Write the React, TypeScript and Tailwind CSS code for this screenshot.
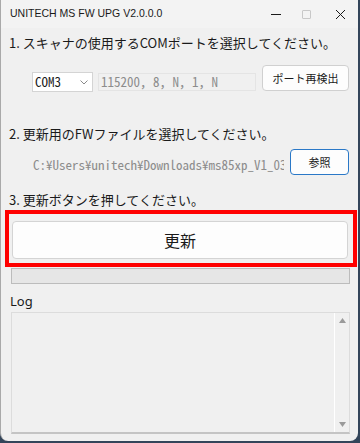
import React from "react";

const jp = { fontFamily: "'Noto Sans CJK JP', 'Noto Sans', sans-serif" };
const mono = { fontFamily: "'Noto Sans Mono CJK JP', 'Noto Sans CJK JP', 'DejaVu Sans Mono', monospace" };

export default function App() {
  return (
    <div className="w-[360px] h-[443px] bg-[#33455a] overflow-hidden">
      <div className="w-[358px] h-[441px] bg-[#f0f0f0] rounded-b-[8px] border-l border-[#a9a9a9] flex flex-col">
        {/* Title bar */}
        <div className="h-[28px] shrink-0 bg-[#f3f3f3] flex items-center pl-[9px]">
          <span className="text-[10.5px] text-[#1a1a1a]" style={{ fontFamily: "'Liberation Sans', sans-serif" }}>
            UNITECH MS FW UPG V2.0.0.0
          </span>
          <div className="ml-auto flex items-center h-full">
            <div className="w-[31px] flex justify-center">
              <div className="w-[10px] h-px bg-[#1a1a1a]" />
            </div>
            <div className="w-[31px] flex justify-center">
              <div className="w-[9px] h-[9px] border border-[#c8c8c8] rounded-[1px]" />
            </div>
            <div className="w-[36px] flex justify-center">
              <svg width="11" height="11" viewBox="0 0 11 11">
                <path d="M1 1L10 10M10 1L1 10" stroke="#1a1a1a" strokeWidth="1" />
              </svg>
            </div>
          </div>
        </div>

        {/* Step 1 */}
        <div className="pl-[8px] mt-[6px] text-[13px] leading-[18px] text-[#1a1a1a]" style={jp}>
          1. スキャナの使用するCOMポートを選択してください。
        </div>
        <div className="flex items-start mt-[13px] pl-[31px]">
          <div className="mt-[7px] w-[61px] h-[20px] bg-white border border-[#d4d4d4] flex items-center pl-[2px] pr-[4px]">
            <span className="text-[13px] text-[#1a1a1a]" style={mono}>COM3</span>
            <svg className="ml-auto" width="8" height="5" viewBox="0 0 8 5">
              <path d="M0.5 0.5L4 4L7.5 0.5" stroke="#8a8a8a" fill="none" strokeWidth="1" />
            </svg>
          </div>
          <div className="mt-[8px] ml-[5px] w-[158px] h-[18px] border border-[#e4e4e4] flex items-center pl-[2px] text-[13px] text-[#8c8c8c]" style={mono}>
            115200，8，N，1，N
          </div>
          <button className="ml-[6px] w-[87px] h-[26px] bg-[#fdfdfd] border border-[#d0d0d0] rounded-[4px] text-[11px] text-[#1a1a1a] flex items-center justify-center" style={jp}>
            ポート再検出
          </button>
        </div>

        {/* Step 2 */}
        <div className="pl-[8px] mt-[33px] text-[13px] leading-[18px] text-[#1a1a1a]" style={jp}>
          2. 更新用のFWファイルを選択してください。
        </div>
        <div className="flex items-start mt-[6px] pl-[31px]">
          <div className="mt-[6px] w-[252px] h-[19px] overflow-hidden whitespace-nowrap flex items-center pl-[1px] text-[13px] text-[#8c8c8c]" style={mono}>
            C:¥Users¥unitech¥Downloads¥ms85xp_V1_03
          </div>
          <button className="ml-[6px] w-[59px] h-[26px] bg-[#fdfdfd] border border-[#2a78c7] rounded-[4px] text-[11px] text-[#1a1a1a] flex items-center justify-center" style={jp}>
            参照
          </button>
        </div>

        {/* Step 3 */}
        <div className="pl-[8px] mt-[16px] text-[13px] leading-[18px] text-[#1a1a1a]" style={jp}>
          3. 更新ボタンを押してください。
        </div>
        <div className="ml-[4px] mt-[1px] w-[352px] h-[57px] border-4 border-[#ff0000] pl-[3px] pt-[7px]">
          <button className="w-[336px] h-[38px] bg-[#fdfdfd] border border-[#d4d4d4] rounded-[4px] text-[16px] text-[#1a1a1a] flex items-center justify-center" style={jp}>
            更新
          </button>
        </div>
        <div className="ml-[10px] mt-[1px] w-[339px] h-[16px] bg-[#e6e6e6] border border-[#bcbcbc]" />

        {/* Log */}
        <div className="pl-[9px] mt-[8px] text-[13px] leading-[18px] text-[#1a1a1a]" style={{ fontFamily: "'Noto Sans', sans-serif" }}>
          Log
        </div>
        <div className="ml-[10px] mt-[2px] w-[339px] h-[122px] border border-[#dcdcdc] border-b-2 border-b-[#c4c4c4] flex">
          <div className="flex-1" />
          <div className="w-[15px] border-l border-[#ffffff] flex flex-col items-center justify-between py-[5px]">
            <svg width="7" height="5" viewBox="0 0 7 5">
              <path d="M3.5 0L7 5H0Z" fill="#9a9a9a" />
            </svg>
            <svg width="7" height="5" viewBox="0 0 7 5">
              <path d="M0 0H7L3.5 5Z" fill="#9a9a9a" />
            </svg>
          </div>
        </div>
      </div>
    </div>
  );
}
